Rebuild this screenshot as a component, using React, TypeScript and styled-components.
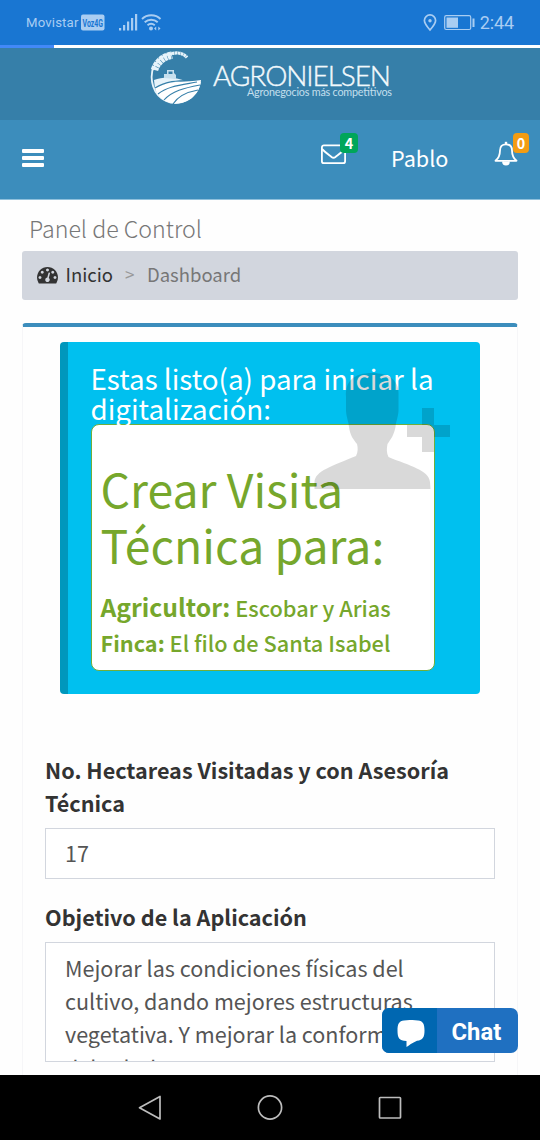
import React from 'react';
import styled, { createGlobalStyle } from 'styled-components';

const sans = '"Noto Sans CJK SC", "Noto Sans", sans-serif';

const GlobalStyle = createGlobalStyle`
  * { box-sizing: border-box; }
  body { margin: 0; background: #fff; font-family: ${sans}; }
  svg { display: block; flex: none; }
`;

const Screen = styled.div`
  position: relative;
  width: 540px;
  height: 1140px;
  display: flex;
  flex-direction: column;
  overflow: hidden;
  background: #fefefe;
`;

const StatusBar = styled.div`
  height: 45px;
  flex: none;
  display: flex;
  align-items: center;
  padding: 0 26px 0 26px;
  background: #1976d2;
  color: #a9cdf2;
  font-family: Roboto, sans-serif;
`;
const Carrier = styled.span`
  font-size: 13.2px;
  letter-spacing: 0.15px;
  width: 55px;
  white-space: nowrap;
`;
const Clock = styled.span`
  font-size: 18px;
  margin-left: 5px;
  letter-spacing: -0.1px;
`;
const Spacer = styled.span`
  flex: 1;
`;

const Progress = styled.div`
  height: 3px;
  flex: none;
  background: #fff;
`;
const ProgressFill = styled.div`
  height: 3px;
  width: 54px;
  background: #4289f8;
`;

const LogoBar = styled.div`
  height: 72px;
  flex: none;
  padding-left: 148px;
  background: #367fa9;
`;

const NavBar = styled.nav`
  height: 80px;
  flex: none;
  display: flex;
  align-items: flex-start;
  padding: 0 0 0 22px;
  color: #fff;
  background: #3c8dbc;
  border-bottom: 1px solid #8fc0dc;
`;
const MenuIcon = styled.div`
  width: 22px;
  display: grid;
  gap: 3px;
  margin-top: 29px;
  & > i { height: 4px; border-radius: 1px; background: #fff; }
`;
const NavItem = styled.div<{ $left: number; $top: number }>`
  position: relative;
  margin: ${(p) => p.$top}px 0 0 ${(p) => p.$left}px;
`;
const UserName = styled.span`
  display: block;
  width: 57px;
  font-size: 21.6px;
  line-height: 32px;
  white-space: nowrap;
`;
const Badge = styled.span<{ $color: string; $x: number; $y: number; $w: number }>`
  position: absolute;
  left: ${(p) => p.$x}px;
  top: ${(p) => p.$y}px;
  width: ${(p) => p.$w}px;
  height: 20px;
  border-radius: 4px;
  background: ${(p) => p.$color};
  font-size: 14.4px;
  font-weight: 700;
  line-height: 19px;
  text-align: center;
`;

const Content = styled.main`
  flex: 1;
  min-height: 0;
  display: flex;
  flex-direction: column;
  padding: 12px 22px 0;
`;
const PageTitle = styled.h1`
  margin: 0 0 0 7px;
  height: 39px;
  font-size: 23.2px;
  font-weight: 300;
  line-height: 32px;
  color: #777;
`;
const Breadcrumb = styled.div`
  height: 49px;
  flex: none;
  width: 495.500px;
  display: flex;
  align-items: center;
  padding: 0 0 2px 15px;
  border-radius: 3px;
  background: #d2d6de;
  color: #777;
`;
const Crumb = styled.span<{ $left: number; $color?: string; $size?: number }>`
  margin: -2px 0 0 ${(p) => p.$left}px;
  color: ${(p) => p.$color ?? '#777'};
  font-size: ${(p) => p.$size ?? 18.5}px;
  line-height: 28px;
`;

const Panel = styled.section`
  width: 496px;
  flex: 1;
  min-height: 0;
  margin-top: 23px;
  border: 1px solid #f6f6f8;
  border-top: 4px solid #3c8dbc;
  border-bottom: 0;
  border-radius: 4px 4px 0 0;
  padding: 15px 22px 0;
`;

const InfoBox = styled.div`
  position: relative;
  width: 420px;
  height: 352px;
  margin-left: 15px;
  padding: 21px 0 0 22.500px;
  border-left: 8px solid #0097bc;
  border-radius: 4px;
  background: #00c0ef;
`;
const InfoTitle = styled.p`
  position: relative;
  z-index: 1;
  margin: 0;
  color: #fff;
  font-size: 27.75px;
  line-height: 30px;
  height: 61px;
  white-space: nowrap;
`;
const VisitCard = styled.div`
  width: 344px;
  height: 247px;
  padding: 35px 0 0 9px;
  border: 1.5px solid #6fae3c;
  border-radius: 8px;
  background: #fff;
  color: #76a72c;
  white-space: nowrap;
`;
const VisitTitle = styled.h2`
  margin: 0 0 16px;
  font-size: 46.3px;
  font-weight: 400;
  line-height: 56px;
`;
const VisitLine = styled.p<{ $size: number; $h: number }>`
  margin: 0;
  font-size: 21.75px;
  font-weight: 500;
  line-height: 36px;
  height: ${(p) => p.$h}px;
  b { font-size: ${(p) => p.$size}px; font-weight: 700; }
`;
const PersonLayer = styled.div`
  position: absolute;
  left: 246px;
  top: 31px;
  z-index: 2;
`;

const Form = styled.div`
  margin-top: 59px;
`;
const Label = styled.div`
  font-size: 21.6px;
  font-weight: 700;
  line-height: 33px;
  color: #333;
  white-space: nowrap;
`;
const Field = styled.div<{ $h: number; $top: number; $gap: number; $pad: number }>`
  width: 450px;
  height: ${(p) => p.$h}px;
  margin: ${(p) => p.$top}px 0 ${(p) => p.$gap}px;
  padding: ${(p) => p.$pad}px 0 0 19px;
  border: 1.5px solid #d2d6de;
  background: #fff;
  font-size: 21.55px;
  line-height: 33px;
  color: #555;
  white-space: nowrap;
  overflow: hidden;
`;
const LastLine = styled.span`
  display: block;
  padding-top: 1px;
`;

const ChatButton = styled.div`
  position: absolute;
  left: 382px;
  top: 1008px;
  width: 136px;
  height: 45px;
  display: flex;
  border-radius: 7px;
  overflow: hidden;
  background: #1f70c1;
  color: #fff;
  font: 700 23.8px/49px Roboto, sans-serif;
`;
const ChatIcon = styled.span`
  width: 55px;
  padding: 12px 0 0 15px;
  margin-right: 14.500px;
  background: #0067b1;
`;

const SystemBar = styled.footer`
  height: 65px;
  flex: none;
  display: flex;
  align-items: center;
  justify-content: center;
  gap: 92px;
  background: #000;
`;

function VoiceTag() {
  return (
    <svg width="37" height="17" viewBox="0 0 37 17">
      <rect x="0" y="0.500" width="23.500" height="16" rx="2" fill="#a9cdf2" />
      <text x="1.500" y="12.700" fontSize="11.500" fontWeight="700" fontFamily="Roboto, sans-serif" fill="#1976d2" textLength="20.500" lengthAdjust="spacingAndGlyphs">Voz4G</text>
    </svg>
  );
}

function LogoMark() {
  return (
    <svg width="250" height="72" viewBox="148 48 250 72">
      <g fill="none" stroke="#e6f3fa">
        <path d="M153.500 66 C149 80 153 95 166 101 C179 107 197 99 200 82" strokeWidth="1.8" />
        <path d="M154.500 70 C157 62 163 57 172 55" strokeWidth="7.500" strokeDasharray="3.400 0.500" />
        <path d="M153 70 C156 60 164 54 173 53.500" strokeWidth="2" />
        <path d="M169 54.500 C177 51.500 183 53 187 57.500" strokeWidth="3.200" strokeDasharray="2.600 0.400" />
      </g>
      <path d="M154 80 C164 76 178 78 184 80.5 C175 82 163 84 155 89 Z" fill="#e6f3fa" />
      <path d="M155 88 C171 79 186 83 201 80 C200 94 189 103.5 176 103.5 C165 103 157 97 155 88 Z" fill="#fff" />
      <g fill="none" stroke="#367fa9" strokeWidth="1.1">
        <path d="M155 88 C166 81 178 80.5 189 80.5" />
        <path d="M158 94 C168 86 181 85 197 82" />
        <path d="M164 100 C172 91 184 88 200 85" />
        <path d="M173 104 C178 96 187 92 198 90" />
      </g>
      <path d="M164 78 V74 H167 V70 H174 V73 L176 75 V79 Z" fill="#c7e0ee" />
      <path d="M168.5 71.5 H172.5 V74 H168.5 Z" fill="#367fa9" />
      <text x="213" y="86" fontSize="28" fontFamily="Lato, sans-serif" fontWeight="300" fill="#f2f9fc" stroke="#f2f9fc" strokeWidth="0.4" textLength="178" lengthAdjust="spacing">AGRONIELSEN</text>
      <text x="247" y="96" fontSize="10.800" fontFamily="Lato, sans-serif" fill="#c4dfed" textLength="145" lengthAdjust="spacing">Agronegocios más competitivos</text>
    </svg>
  );
}

function SignalIcons() {
  return (
    <svg width="44" height="20" viewBox="118 13 44 20">
      <g fill="#a9cdf2">
        <rect x="119" y="28" width="2.2" height="2.5" />
        <rect x="123" y="25" width="2.2" height="5.5" />
        <rect x="127" y="21.5" width="2.2" height="9" />
        <rect x="131" y="18" width="2.2" height="12.5" />
        <rect x="135" y="14" width="2.2" height="16.5" />
        <circle cx="151" cy="28.5" r="2" />
        <path d="M154 28.5 l2.2 -2 v4z M160.5 28.5 l-2.2 -2 v4z" />
      </g>
      <g fill="none" stroke="#a9cdf2" strokeWidth="1.9">
        <path d="M142 19 C147 14 155.500 14 160.500 19" />
        <path d="M144.700 22.300 C148.500 18.800 154 18.800 157.700 22.300" />
        <path d="M147.500 25.300 C149.700 23.500 152.500 23.500 154.800 25.300" />
      </g>
    </svg>
  );
}

function StatusRightIcons() {
  return (
    <svg width="53" height="20" viewBox="422 13 53 20">
      <g fill="none" stroke="#a9cdf2">
        <path d="M430 30 C426.500 26 424.400 23.500 424.400 20.500 A5.600 5.600 0 0 1 435.600 20.500 C435.600 23.500 433.500 26 430 30Z" strokeWidth="1.7" />
        <rect x="444.700" y="15.700" width="26" height="13.800" rx="1.500" strokeWidth="1.200" />
      </g>
      <g fill="#a9cdf2">
        <circle cx="430" cy="20.800" r="1.700" />
        <rect x="446.500" y="17.500" width="11.500" height="10.300" />
        <rect x="472.500" y="18.500" width="2" height="8.500" />
      </g>
    </svg>
  );
}

function DashboardIcon() {
  return (
    <svg width="21" height="21" viewBox="0 0 1792 1792" fill="#333">
      <path d="M384 1152q0-53-37.5-90.5t-90.5-37.5-90.5 37.5-37.5 90.5 37.5 90.5 90.5 37.5 90.5-37.5 37.5-90.5zm192-448q0-53-37.5-90.5t-90.5-37.5-90.5 37.5-37.5 90.5 37.5 90.5 90.5 37.5 90.5-37.5 37.5-90.5zm428 481l101-382q6-26-7.5-48.5t-38.5-29.5-48 6.5-30 39.5l-101 382q-60 5-107 43.5t-63 98.5q-20 77 20 146t117 89 146-20 89-117q16-60-6-117t-72-91zm660-33q0-53-37.5-90.5t-90.5-37.5-90.5 37.5-37.5 90.5 37.5 90.5 90.5 37.5 90.5-37.5 37.5-90.5zm-640-640q0-53-37.5-90.5t-90.5-37.5-90.5 37.5-37.5 90.5 37.5 90.5 90.5 37.5 90.5-37.5 37.5-90.5zm448 192q0-53-37.5-90.5t-90.5-37.5-90.5 37.5-37.5 90.5 37.5 90.5 90.5 37.5 90.5-37.5 37.5-90.5zm320 448q0 261-141 483-19 29-54 29h-1402q-35 0-54-29-141-221-141-483 0-182 71-348t191-286 286-191 348-71 348 71 286 191 191 286 71 348z" />
    </svg>
  );
}

export default function App() {
  return (
    <Screen>
      <GlobalStyle />
      <StatusBar>
        <Carrier>Movistar</Carrier>
        <VoiceTag />
        <SignalIcons />
        <Spacer />
        <StatusRightIcons />
        <Clock>2:44</Clock>
      </StatusBar>
      <Progress><ProgressFill /></Progress>
      <LogoBar><LogoMark /></LogoBar>
      <NavBar>
        <MenuIcon><i /><i /><i /></MenuIcon>
        <NavItem $left={277} $top={24}>
          <svg width="25" height="21" viewBox="0 0 25 21" fill="none" stroke="#fff" strokeWidth="1.8">
            <rect x="0.900" y="1.400" width="23.200" height="17.800" rx="2" />
            <path d="M1 5 C5 9 8 11 10.500 13 Q12.500 14.600 14.500 13 C17 11 20 9 24 5" />
          </svg>
          <Badge $color="#00a65a" $x={19} $y={-11} $w={18}>4</Badge>
        </NavItem>
        <NavItem $left={45} $top={22}><UserName>Pablo</UserName></NavItem>
        <NavItem $left={46} $top={21}>
          <svg width="24" height="26" viewBox="0 0 24 26" fill="none" stroke="#fff" strokeWidth="1.8">
            <path d="M1.500 19.800 C5 17 6 13 6 9.500 C6 5.500 8 3.300 12 3.300 C16 3.300 18 5.500 18 9.500 C18 13 19 17 22.500 19.800 Z" strokeLinejoin="round" />
            <path d="M12 0.800 V3.300" strokeWidth="2.400" />
            <path d="M8.800 20.500 A3.200 3.600 0 0 0 15.200 20.500 Z" fill="#fff" stroke="none" />
            <path d="M9 20.500 A3 3 0 0 0 15 20.500" />
          </svg>
          <Badge $color="#f39c12" $x={19} $y={-8} $w={16}>0</Badge>
        </NavItem>
      </NavBar>
      <Content>
        <PageTitle>Panel de Control</PageTitle>
        <Breadcrumb>
          <DashboardIcon />
          <Crumb $left={7.5} $color="#333">Inicio</Crumb>
          <Crumb $left={12} $color="#999" $size={17}>&gt;</Crumb>
          <Crumb $left={12.5}>Dashboard</Crumb>
        </Breadcrumb>
        <Panel>
          <InfoBox>
            <InfoTitle>Estas listo(a) para iniciar la<br />digitalización:</InfoTitle>
            <VisitCard>
              <VisitTitle>Crear Visita<br />Técnica para:</VisitTitle>
              <VisitLine $size={24.7} $h={37}><b>Agricultor:</b> Escobar y Arias</VisitLine>
              <VisitLine $size={21.7} $h={36}><b>Finca:</b> El filo de Santa Isabel</VisitLine>
            </VisitCard>
            <PersonLayer>
              <svg width="136" height="117" viewBox="0 0 136 117" fill="#000" fillOpacity="0.15">
                <path d="M32 24 C31 8 40 0 58 0 C76 0 86 8 84.500 24 L84.500 38 C84 45 82 48 81.500 54 C80 62 77 66 73.500 71 C72.500 76 72.500 80 74.500 84 C96 93 115 97 116 109 L116.500 116 H0.500 L0.500 109 C1 98 18 93 42 83 C44 79 44 75 43 71 C39 66 36 62 35 54 C34.500 48 32.500 45 32 38 Z" />
                <path d="M108 35 H120 V52 H136 V64 H120 V79 H108 V64 H93 V52 H108 Z" />
              </svg>
            </PersonLayer>
          </InfoBox>
          <Form>
            <Label>No. Hectareas Visitadas y con Asesoría<br />Técnica</Label>
            <Field $h={51} $top={9} $gap={21} $pad={7}>17</Field>
            <Label>Objetivo de la Aplicación</Label>
            <Field $h={120} $top={9} $gap={0} $pad={8}>
              Mejorar las condiciones físicas del<br />
              cultivo, dando mejores estructuras<br />
              vegetativa. Y mejorar la conformación
              <LastLine>del salud</LastLine>
            </Field>
          </Form>
        </Panel>
      </Content>
      <SystemBar>
        <svg width="28" height="28" viewBox="0 0 28 28" fill="none" stroke="#bdbdbd" strokeWidth="1.700" strokeLinejoin="round">
          <path d="M24 2.500 V25 L3.500 13.700 Z" />
        </svg>
        <svg width="28" height="28" viewBox="0 0 28 28" fill="none" stroke="#bdbdbd" strokeWidth="1.700">
          <circle cx="14" cy="13.500" r="11.600" />
        </svg>
        <svg width="28" height="28" viewBox="0 0 28 28" fill="none" stroke="#bdbdbd" strokeWidth="1.700">
          <rect x="3.500" y="3.500" width="21" height="20.500" rx="0.800" />
        </svg>
      </SystemBar>
      <ChatButton>
        <ChatIcon>
          <svg width="28" height="28" viewBox="0 0 28 28" fill="#fff">
            <path d="M7 0.500 C12 -0.200 16 -0.200 21 0.500 C26 1 27.500 4 27.500 10.500 C27.500 17 26 20 20 20.800 C15 23 12 25.500 9.500 27 L9.500 21 C2 20.500 0.500 18 0.500 10.500 C0.500 4 2 1 7 0.500 Z" />
          </svg>
        </ChatIcon>
        Chat
      </ChatButton>
    </Screen>
  );
}
